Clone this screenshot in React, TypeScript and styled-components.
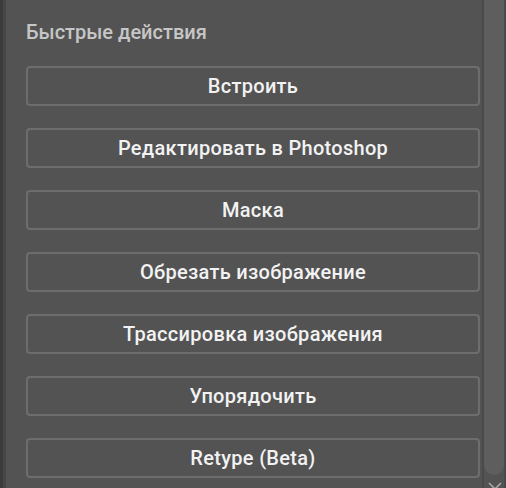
import React from "react";
import styled, { createGlobalStyle } from "styled-components";

const Global = createGlobalStyle`
  html, body { margin: 0; padding: 0; background: #535353; }
  body { width: 506px; height: 488px; overflow: hidden; }
  #root { width: 506px; height: 488px; }
`;

const Frame = styled.div`
  display: flex;
  width: 506px;
  height: 488px;
  background: #535353;
  font-family: Roboto, "Noto Sans", sans-serif;
  overflow: hidden;
`;

const EdgeDark = styled.div`
  width: 3px;
  background: #3b3b3b;
  flex: none;
`;

const EdgeMid = styled.div`
  width: 3px;
  background: #464646;
  flex: none;
`;

const Panel = styled.div`
  flex: 1;
  display: flex;
  flex-direction: column;
  padding: 18px 2px 0 20px;
`;

const Title = styled.div`
  color: #c6c6c6;
  font-size: 20px;
  font-weight: 500;
  line-height: 28px;
  margin-bottom: 20px;
`;

const Actions = styled.div`
  display: flex;
  flex-direction: column;
  gap: 22px;
`;

const ActionButton = styled.button`
  box-sizing: border-box;
  height: 40px;
  width: 100%;
  background: #535353;
  border: 2px solid #6d6d6d;
  border-radius: 4px;
  color: #f2f2f2;
  font-family: Roboto, "Noto Sans", sans-serif;
  font-size: 20px;
  font-weight: 500;
  letter-spacing: 0.3px;
  display: flex;
  align-items: center;
  justify-content: center;
  padding: 0;
`;

const ScrollColumn = styled.div`
  position: relative;
  width: 24px;
  flex: none;
  display: flex;
  border-left: 2px solid #4a4a4a;
  border-right: 2px solid #4a4a4a;
  box-sizing: border-box;
`;

const Thumb = styled.div`
  width: 20px;
  height: 475px;
  background: #5e5e5e;
  border-radius: 0 0 10px 10px;
`;

const Chevron = styled.svg`
  position: absolute;
  left: 3px;
  top: 481px;
`;

const actions = [
  "Встроить",
  "Редактировать в Photoshop",
  "Маска",
  "Обрезать изображение",
  "Трассировка изображения",
  "Упорядочить",
  "Retype (Beta)",
];

export default function App() {
  return (
    <>
      <Global />
      <Frame>
        <EdgeDark />
        <EdgeMid />
        <Panel>
          <Title>Быстрые действия</Title>
          <Actions>
            {actions.map((a) => (
              <ActionButton key={a}>{a}</ActionButton>
            ))}
          </Actions>
        </Panel>
        <ScrollColumn>
          <Thumb />
          <Chevron width="16" height="10" viewBox="0 0 16 10">
            <path d="M2 2 L8 8 L14 2" stroke="#a8a8a8" strokeWidth="1.6" fill="none" />
          </Chevron>
        </ScrollColumn>
      </Frame>
    </>
  );
}
